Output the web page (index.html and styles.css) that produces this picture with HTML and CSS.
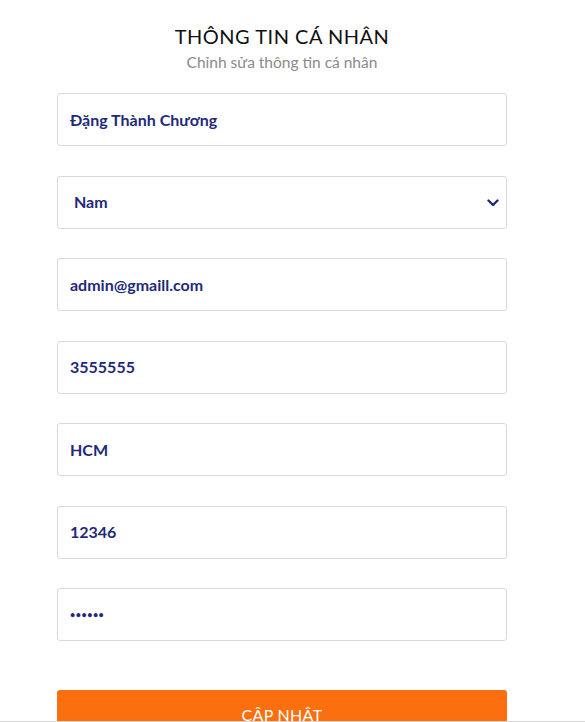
FILE: index.html
```html
<!DOCTYPE html>
<html lang="vi">
<head>
<meta charset="utf-8">
<link rel="stylesheet" href="styles.css">
</head>
<body>
<div class="page">
  <div class="head">
    <h1 class="title">THÔNG TIN CÁ NHÂN</h1>
    <p class="sub">Chỉnh sửa thông tin cá nhân</p>
  </div>
  <form class="form">
    <input class="field" type="text" value="Đặng Thành Chương">
    <div class="select-wrap">
      <select class="field select">
        <option>Nam</option>
        <option>Nữ</option>
      </select>
      <svg class="chev" width="12" height="8" viewBox="0 0 12 8"><path d="M1.5 1.5 L6 6 L10.5 1.5" fill="none" stroke="#1f2a7a" stroke-width="2.4" stroke-linecap="round" stroke-linejoin="round"/></svg>
    </div>
    <input class="field" type="text" value="admin@gmaill.com">
    <input class="field" type="text" value="3555555">
    <input class="field" type="text" value="HCM">
    <input class="field" type="text" value="12346">
    <input class="field pw" type="password" value="123456">
    <button class="btn" type="button">CẬP NHẬT</button>
  </form>
</div>
</body>
</html>
```

FILE: styles.css
```css
html, body {
  margin: 0;
  padding: 0;
  background: #fff;
  overflow: hidden;
  height: 722px;
}
body {
  font-family: "Lato", "Open Sans", sans-serif;
  border-bottom: 1px solid #d6d6d6;
  box-sizing: border-box;
}
.page {
  width: 450px;
  margin: 0 auto 0 57px;
  padding-top: 24px;
}
.head {
  text-align: center;
  margin-bottom: 22px;
}
.title {
  margin: 0;
  font-weight: 400;
  font-size: 20px;
  letter-spacing: 0.5px;
  color: #111;
  line-height: 24px;
}
.sub {
  margin: 5px 0 0;
  font-size: 15.5px;
  font-weight: 400;
  color: #8a8a8a;
  line-height: 18px;
}
.form {
  display: flex;
  flex-direction: column;
  gap: 29.5px;
}
.field {
  box-sizing: border-box;
  width: 450px;
  height: 53px;
  border: 1px solid #d9d9d9;
  border-radius: 3px;
  padding: 0 12px 1px;
  font-family: inherit;
  font-size: 16px;
  font-weight: 700;
  color: #1f2a7a;
  background: #fff;
  outline: none;
}
.select-wrap {
  position: relative;
}
.select {
  appearance: none;
  -webkit-appearance: none;
  padding-left: 16px;
}
.chev {
  position: absolute;
  right: 8px;
  top: 23px;
  pointer-events: none;
}
.pw {
  font-size: 9px;
  letter-spacing: 0.5px;
}
.btn {
  margin-top: 19px;
  padding: 15px 0;
  line-height: 20px;
  border: none;
  border-radius: 3px;
  background: #fb6f0f;
  color: #fff;
  font-family: inherit;
  font-size: 16px;
  font-weight: 400;
  letter-spacing: 0.3px;
}
```
